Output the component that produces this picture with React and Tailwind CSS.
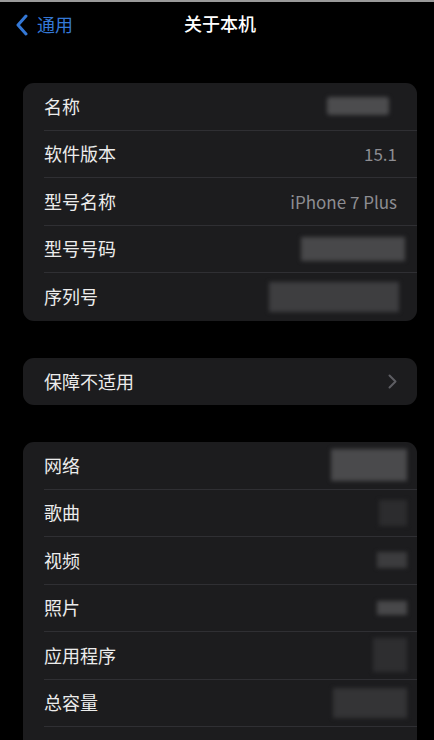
import React from "react";

const font = { fontFamily: '"Noto Sans CJK SC", "Noto Sans", sans-serif' };

function Blob({ className }) {
  return <div className={`blur-[2px] ${className}`} />;
}

function Row({ label, value, right, last }) {
  return (
    <div className="flex h-[47.5px] items-stretch pl-[21px]">
      <div
        className={`flex flex-1 items-center justify-between pr-[20px] ${
          last ? "" : "border-b border-[#2f2f33]"
        }`}
      >
        <span className="text-[18px] text-[#ececec]">{label}</span>
        {value && <span className="text-[17px] text-[#8d8d92]">{value}</span>}
        {right}
      </div>
    </div>
  );
}

function Chevron() {
  return (
    <svg width="9" height="15" viewBox="0 0 9 15" fill="none">
      <path d="M1.5 1.5 7.5 7.5 1.5 13.5" stroke="#5d5d62" strokeWidth="2" strokeLinecap="round" strokeLinejoin="round" />
    </svg>
  );
}

export default function App() {
  return (
    <div className="h-[740px] w-[434px] overflow-hidden border-t-2 border-[#9a9a9a] bg-black" style={font}>
      <header className="relative flex h-[42px] items-center justify-center">
        <div className="absolute left-[15px] top-[9px] flex items-center gap-[8px]">
          <svg width="14" height="22" viewBox="0 0 14 22" fill="none">
            <path d="M11 2 3 11l8 9" stroke="#3478d6" strokeWidth="3" strokeLinecap="round" strokeLinejoin="round" />
          </svg>
          <span className="text-[18px] text-[#3478d6]">通用</span>
        </div>
        <span className="pl-[6px] text-[18px] font-medium text-white">关于本机</span>
      </header>

      <div className="mt-[39px] flex flex-col gap-[37px] pl-[23px] pr-[17px]">
        <div className="overflow-hidden rounded-[11px] bg-[#1c1c1e]">
          <Row label="名称" right={<Blob className="mr-[8px] h-[18px] w-[62px] rounded-[3px] bg-[#4c4c4e]" />} />
          <Row label="软件版本" value="15.1" />
          <Row label="型号名称" value="iPhone 7 Plus" />
          <Row label="型号号码" right={<Blob className="-mr-[8px] h-[24px] w-[104px] bg-[#48484a]" />} />
          <Row label="序列号" last right={<Blob className="-mr-[2px] h-[30px] w-[130px] bg-[#3e3e40]" />} />
        </div>

        <div className="overflow-hidden rounded-[11px] bg-[#1c1c1e]">
          <Row label="保障不适用" last right={<Chevron />} />
        </div>

        <div className="overflow-hidden rounded-[11px] bg-[#1c1c1e]">
          <Row label="网络" right={<Blob className="-mr-[10px] h-[32px] w-[76px] bg-[#4a4a4c]" />} />
          <Row label="歌曲" right={<Blob className="-mr-[10px] h-[26px] w-[28px] bg-[#2c2c2e]" />} />
          <Row label="视频" right={<Blob className="-mr-[10px] h-[16px] w-[30px] bg-[#3c3c3e]" />} />
          <Row label="照片" right={<Blob className="-mr-[10px] h-[14px] w-[30px] bg-[#48484a]" />} />
          <Row label="应用程序" right={<Blob className="-mr-[10px] h-[34px] w-[34px] bg-[#2e2e30]" />} />
          <Row label="总容量" right={<Blob className="-mr-[10px] h-[30px] w-[74px] bg-[#343436]" />} />
          <Row label="" last />
        </div>
      </div>
    </div>
  );
}
